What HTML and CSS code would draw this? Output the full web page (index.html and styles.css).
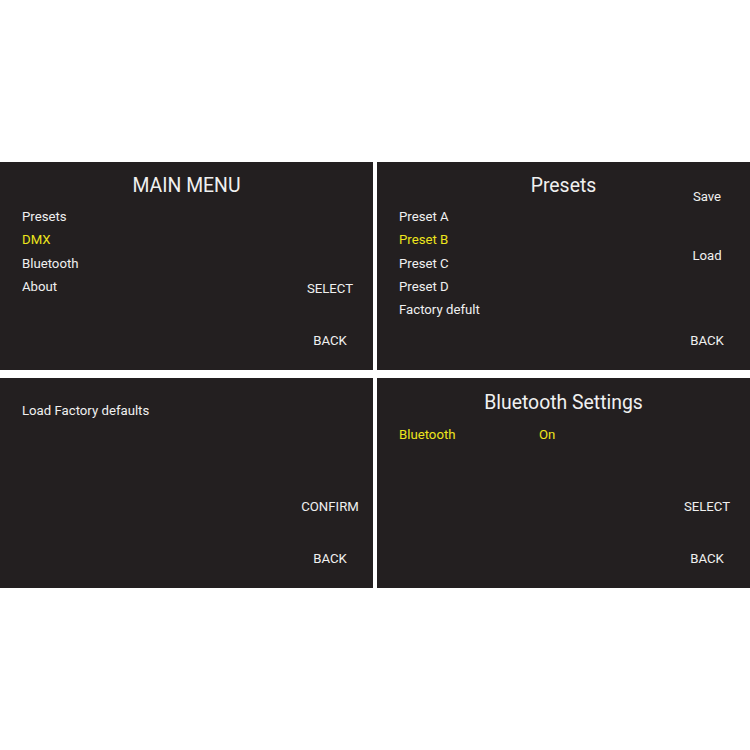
FILE: index.html
```html
<!doctype html>
<html>
<head>
<meta charset="utf-8">
<link rel="stylesheet" href="styles.css">
</head>
<body>
<div class="screens">

	<!-- main menu -->
	<div class="panel">
		<div class="title">MAIN MENU</div>
		<ul class="list">
			<li>Presets</li>
			<li class="sel">DMX</li>
			<li>Bluetooth</li>
			<li>About</li>
		</ul>
		<div class="actions">
			<span>SELECT</span>
			<span>BACK</span>
		</div>
	</div>

	<!-- presets -->
	<div class="panel">
		<div class="title">Presets</div>
		<ul class="list">
			<li>Preset A</li>
			<li class="sel">Preset B</li>
			<li>Preset C</li>
			<li>Preset D</li>
			<li>Factory defult</li>
		</ul>
		<div class="actions actions-top">
			<span>Save</span>
			<span>Load</span>
			<span class="back">BACK</span>
		</div>
	</div>

	<!-- factory reset confirm -->
	<div class="panel panel-low">
		<ul class="list list-notitle">
			<li>Load Factory defaults</li>
		</ul>
		<div class="actions">
			<span>CONFIRM</span>
			<span>BACK</span>
		</div>
	</div>

	<!-- bluetooth -->
	<div class="panel panel-low">
		<div class="title">Bluetooth Settings</div>
		<ul class="list">
			<li class="sel setting"><span class="label">Bluetooth</span><span>On</span></li>
		</ul>
		<div class="actions">
			<span>SELECT</span>
			<span>BACK</span>
		</div>
	</div>

</div>
</body>
</html>
```

FILE: styles.css
```css
body{
	margin:0;
	background:#fff;
	font-family:Roboto, "Liberation Sans", sans-serif;
}
.screens{
	display:grid;
	grid-template-columns:373px 373px;
	grid-template-rows:208px 210px;
	column-gap:4px;
	row-gap:8px;
	padding-top:162px;
}
.panel{
	display:grid;
	grid-template-columns:1fr 86px;
	grid-template-rows:auto 1fr;
	background:#231f20;
	color:#f0f0f0;
}
.title{
	grid-column:1 / 3;
	grid-row:1;
	padding-top:12px;
	font-size:19.4px;
	line-height:24px;
	text-align:center;
}
.list{
	grid-column:1;
	grid-row:2;
	margin:0;
	padding:7px 0 0 22px;
	list-style:none;
	font-size:13.2px;
	line-height:23.3px;
}
.panel-low .title{
	padding-top:13px;
}
.panel-low .list{
	padding-top:7.5px;
}
.panel-low .list-notitle{
	padding-top:21px;
}
.sel{
	color:#ede51c;
}
.setting{
	display:flex;
}
.label{
	width:140px;
}
.actions{
	grid-column:2;
	grid-row:1 / 3;
	display:flex;
	flex-direction:column;
	justify-content:flex-end;
	align-items:center;
	gap:32px;
	padding-bottom:19px;
	font-size:13.2px;
	line-height:20px;
}
.actions-top{
	justify-content:flex-start;
	gap:39px;
	padding-top:24.5px;
}
.back{
	margin-top:auto;
}
```
